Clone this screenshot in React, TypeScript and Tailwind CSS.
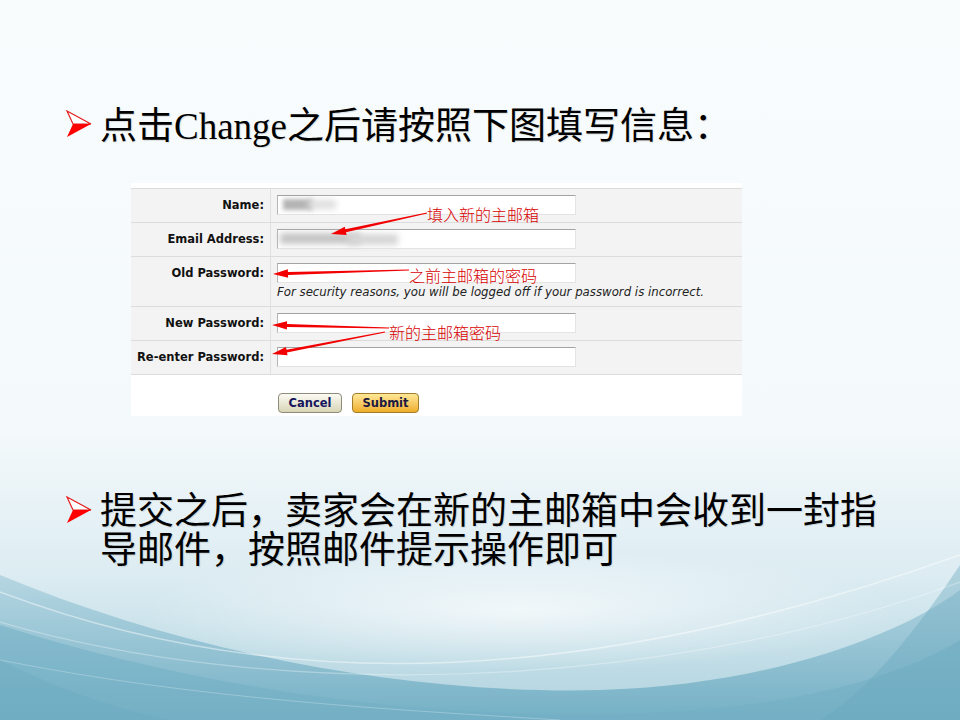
import React from "react";

type Pt = [number, number];

const rows = [
  { label: "Name:", blur: "name" },
  { label: "Email Address:", blur: "email" },
  { label: "Old Password:", help: true },
  { label: "New Password:" },
  { label: "Re-enter Password:" },
];

function Bullet() {
  return (
    <svg width="28" height="28" viewBox="0 0 28 28" className="shrink-0">
      <polygon points="3,1 27,14 9,14" fill="#fff" stroke="#e31c1c" strokeWidth="1.2" />
      <polygon points="9,14 27,14 3,27" fill="#f00" />
    </svg>
  );
}

// tapered red pointer, tail -> head
function Pointer({ t, h }: { t: Pt; h: Pt }) {
  const dx = h[0] - t[0];
  const dy = h[1] - t[1];
  const len = Math.hypot(dx, dy);
  const ux = dx / len;
  const uy = dy / len;
  const nx = -uy;
  const ny = ux;
  const bx = h[0] - ux * 15;
  const by = h[1] - uy * 15;
  const pts: Pt[] = [
    [t[0] + nx * 0.5, t[1] + ny * 0.5],
    [bx + nx * 1.5, by + ny * 1.5],
    [bx + nx * 4.2, by + ny * 4.2],
    h,
    [bx - nx * 4.2, by - ny * 4.2],
    [bx - nx * 1.5, by - ny * 1.5],
    [t[0] - nx * 0.5, t[1] - ny * 0.5],
  ];
  return <polygon points={pts.map((p) => p.join(",")).join(" ")} fill="#f20000" />;
}

function Field({ blur }: { blur?: string }) {
  return (
    <div className="relative w-[299px] h-[20px] bg-white border border-t-[#a3a3a3] border-l-[#b5b5b5] border-r-[#e4e4e4] border-b-[#e4e4e4]">
      {blur === "name" && (
        <>
          <span className="absolute left-[5px] top-[3px] w-[30px] h-[11px] bg-[#b4b4b4] blur-[2px]" />
          <span className="absolute left-[30px] top-[4px] w-[28px] h-[9px] bg-[#dedede] blur-[3px]" />
        </>
      )}
      {blur === "email" && (
        <>
          <span className="absolute left-[2px] top-[3px] w-[80px] h-[11px] bg-[#c4c4c4] blur-[3px]" />
          <span className="absolute left-[70px] top-[4px] w-[50px] h-[11px] bg-[#d6d6d6] blur-[3px]" />
        </>
      )}
    </div>
  );
}

function Background() {
  return (
    <svg viewBox="0 0 960 720" preserveAspectRatio="none" className="absolute inset-0 w-full h-full">
      <defs>
        <linearGradient id="bg" x1="0" y1="0" x2="0" y2="1">
          <stop offset="0" stopColor="#f8fcfd" />
          <stop offset="0.6" stopColor="#f4f9fb" />
          <stop offset="0.8" stopColor="#dcecf2" />
          <stop offset="1" stopColor="#aed2de" />
        </linearGradient>
        <linearGradient id="teal" x1="0" y1="0" x2="0" y2="1">
          <stop offset="0" stopColor="#b2d4e0" />
          <stop offset="1" stopColor="#6eacc2" />
        </linearGradient>
        <radialGradient id="glow" cx="0.5" cy="0.5" r="0.5">
          <stop offset="0" stopColor="#ffffff" stopOpacity="0.7" />
          <stop offset="1" stopColor="#ffffff" stopOpacity="0" />
        </radialGradient>
      </defs>
      <rect width="960" height="720" fill="url(#bg)" />
      <path d="M0 575 C 180 650, 400 695, 600 690 C 770 685, 900 635, 960 590 L960 720 L0 720 Z" fill="url(#teal)" opacity="0.9" />
      <path d="M0 625 C 220 695, 480 730, 720 708 C 840 696, 920 665, 960 640 L960 720 L0 720 Z" fill="#72afc4" opacity="0.55" />
      <path d="M960 565 C 920 625, 870 690, 820 720 L960 720 Z" fill="#6aa8bf" opacity="0.4" />
      <path d="M0 660 C 60 690, 120 710, 170 720 L0 720 Z" fill="#6aa8bf" opacity="0.35" />
      <ellipse cx="520" cy="610" rx="380" ry="60" fill="url(#glow)" />
      <path d="M0 592 C 220 675, 520 712, 960 555" stroke="#ffffff" strokeOpacity="0.45" strokeWidth="1.5" fill="none" />
      <path d="M0 622 C 260 698, 640 698, 960 582" stroke="#ffffff" strokeOpacity="0.3" strokeWidth="1.2" fill="none" />
      <path d="M0 660 C 200 700, 400 710, 560 720" stroke="#ffffff" strokeOpacity="0.25" strokeWidth="1" fill="none" />
    </svg>
  );
}

export default function App() {
  return (
    <div className="relative w-[960px] h-[720px] overflow-hidden">
      <Background />

      <div className="relative pt-[107px]">
        {/* heading */}
        <div className="flex items-start pl-[64px]">
          <div className="mt-[3px]">
            <Bullet />
          </div>
          <div className="ml-[8px] text-[37px] leading-[40px] text-black font-['Liberation_Serif','Noto_Sans_CJK_SC',serif] [text-shadow:1px_1px_1px_rgba(0,0,0,0.12)]">
            点击Change之后请按照下图填写信息：
          </div>
        </div>

        {/* form screenshot */}
        <div className="relative ml-[131px] mt-[36px] w-[611px] h-[233px] bg-white pt-[5px] font-['DejaVu_Sans',sans-serif] text-[#111]">
          <div className="border-y border-[#dcdcdc] bg-[#f3f3f3]">
            {rows.map((r, i) => (
              <div key={r.label} className={"grid grid-cols-[140px_1fr] " + (i > 0 ? "border-t border-[#dcdcdc]" : "")}>
                <div className="border-r border-[#e0e0e0] text-right pr-[6px] pt-[6px] leading-[20px] text-[11.5px] font-bold whitespace-nowrap">
                  {r.label}
                </div>
                <div className={"pl-[6px] pt-[6px] " + (r.help ? "pb-[6px]" : "pb-[7px]")}>
                  <Field blur={r.blur} />
                  {r.help && (
                    <div className="mt-[2px] text-[11.75px] leading-[15px] italic text-[#222] whitespace-nowrap">
                      For security reasons, you will be logged off if your password is incorrect.
                    </div>
                  )}
                </div>
              </div>
            ))}
          </div>

          <div className="mt-[18px] pl-[147px] flex gap-[10px]">
            <button className="w-[64px] h-[20px] rounded-[4px] border border-[#8e8b78] bg-linear-to-b from-[#fbfbf4] to-[#d8d5b6] text-[11.5px] font-bold leading-[18px] text-[#15155e]">
              Cancel
            </button>
            <button className="w-[67px] h-[20px] rounded-[4px] border border-[#a07c2c] bg-linear-to-b from-[#ffe896] to-[#eeae22] text-[11.5px] font-bold leading-[18px] text-[#1c1940]">
              Submit
            </button>
          </div>

          {/* annotations */}
          <svg viewBox="131 183 611 233" className="absolute inset-0 w-full h-full pointer-events-none">
            <Pointer t={[427, 213]} h={[331, 234]} />
            <Pointer t={[409, 270]} h={[273, 274]} />
            <Pointer t={[389, 328]} h={[272, 325]} />
            <Pointer t={[385, 332]} h={[272, 354]} />
          </svg>
          <div className="absolute left-[296px] top-[23px] text-[16px] leading-[16px] text-[#d80000] font-['Noto_Sans_CJK_SC',sans-serif] font-light whitespace-nowrap">
            填入新的主邮箱
          </div>
          <div className="absolute left-[278px] top-[85px] text-[16px] leading-[15px] text-[#d80000] font-['Noto_Sans_CJK_SC',sans-serif] font-light whitespace-nowrap">
            之前主邮箱的密码
          </div>
          <div className="absolute left-[258px] top-[141px] text-[16px] leading-[16px] text-[#d80000] font-['Noto_Sans_CJK_SC',sans-serif] font-light whitespace-nowrap">
            新的主邮箱密码
          </div>
        </div>

        {/* second point */}
        <div className="flex items-start pl-[64px] mt-[76px]">
          <div className="mt-[4px]">
            <Bullet />
          </div>
          <div className="ml-[8px] w-[790px] text-[37px] leading-[39px] text-black font-['Liberation_Serif','Noto_Sans_CJK_SC',serif] [text-shadow:1px_1px_1px_rgba(0,0,0,0.12)]">
            提交之后，卖家会在新的主邮箱中会收到一封指导邮件，按照邮件提示操作即可
          </div>
        </div>
      </div>
    </div>
  );
}
